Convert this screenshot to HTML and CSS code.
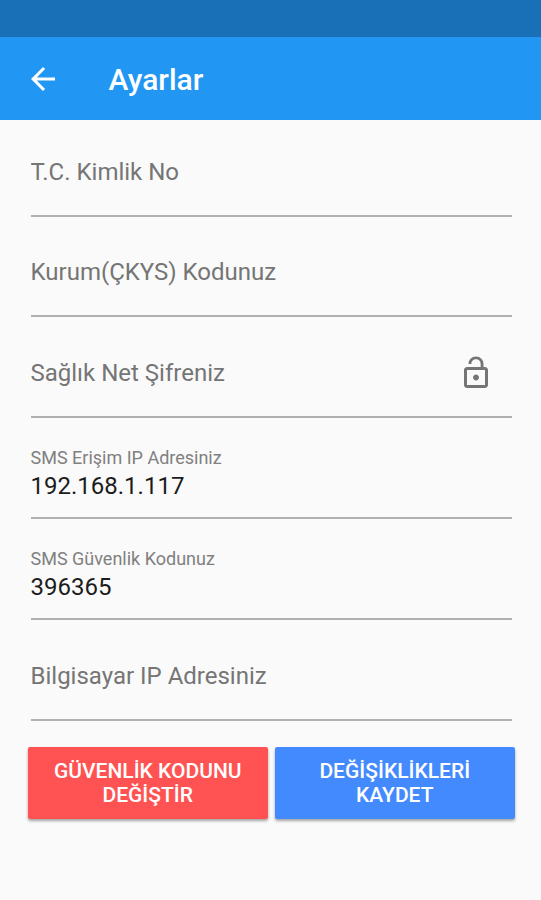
FILE: index.html
```html
<!DOCTYPE html>
<html lang="tr">
<head>
  <meta charset="UTF-8" />
  <meta name="viewport" content="width=device-width, initial-scale=1.0"/>
  <title>Ayarlar</title>
  <link rel="stylesheet" href="styles.css">
</head>
<body>
  <div class="status-bar"></div>
  <header class="app-bar">
    <svg class="icon" viewBox="0 0 24 24"><path fill="#fff" d="M20 11H7.83l5.59-5.59L12 4l-8 8 8 8 1.41-1.41L7.83 13H20v-2z"/></svg>
    <h1>Ayarlar</h1>
  </header>

  <form class="ayarlar">
    <label class="alan">
      <input type="text" placeholder="T.C. Kimlik No" />
    </label>
    <label class="alan">
      <input type="text" placeholder="Kurum(ÇKYS) Kodunuz" />
    </label>
    <label class="alan sifre">
      <input type="password" placeholder="Sağlık Net Şifreniz" />
      <svg class="icon" viewBox="0 0 24 24"><path fill="#757575" d="M12 17c1.1 0 2-.9 2-2s-.9-2-2-2-2 .9-2 2 .9 2 2 2zm6-9h-1V6c0-2.76-2.24-5-5-5S7 3.24 7 6h1.9c0-1.71 1.39-3.1 3.1-3.1 1.71 0 3.1 1.39 3.1 3.1v2H6c-1.1 0-2 .9-2 2v10c0 1.1.9 2 2 2h12c1.1 0 2-.9 2-2V10c0-1.1-.9-2-2-2zm0 12H6V10h12v10z"/></svg>
    </label>
    <label class="alan dolu">
      <span>SMS Erişim IP Adresiniz</span>
      <input type="text" value="192.168.1.117" />
    </label>
    <label class="alan dolu">
      <span>SMS Güvenlik Kodunuz</span>
      <input type="text" value="396365" />
    </label>
    <label class="alan">
      <input type="text" placeholder="Bilgisayar IP Adresiniz" />
    </label>
  </form>

  <div class="botoes">
    <button class="degistir">GÜVENLİK KODUNU<br>DEĞİŞTİR</button>
    <button class="kaydet">DEĞİŞİKLİKLERİ<br>KAYDET</button>
  </div>
</body>
</html>
```

FILE: styles.css
```css
* {
  margin: 0; padding: 0; box-sizing: border-box;
  font-family: Roboto, sans-serif;
}
body {
  height: 100vh;
  overflow: hidden;
  background: #fafafa;
}
.status-bar {
  height: 37px;
  background: #1a70b6;
}
.app-bar {
  display: flex;
  align-items: center;
  height: 83px;
  padding-left: 24.5px;
  background: #2196f3;
  color: #fff;
}
.app-bar h1 {
  margin-left: 48px;
  padding-top: 2px;
  font-size: 30px;
  font-weight: 500;
}
.icon {
  flex: none;
  width: 36px;
  height: 36px;
}
.ayarlar {
  padding: 0 29px 0 30.5px;
  margin-top: -4.2px;
}
.alan {
  display: flex;
  flex-direction: column;
  justify-content: flex-end;
  height: 100.8px;
  padding-bottom: 29px;
  border-bottom: 2px solid #b0b0b0;
}
.alan input {
  width: 100%;
  height: 28px;
  border: none;
  outline: none;
  background: transparent;
  font-size: 24px;
  line-height: 28px;
  color: #1c1c1c;
}
.alan input::placeholder {
  color: #757575;
}
.alan span {
  margin-bottom: 3px;
  font-size: 18px;
  line-height: 22px;
  color: #808080;
}
.dolu {
  padding-bottom: 17px;
}
.sifre {
  flex-direction: row;
  justify-content: space-between;
  align-items: flex-end;
  padding-right: 18px;
}
.sifre input {
  flex: 1;
}
.sifre .icon {
  margin-bottom: -4px;
}
.botoes {
  display: grid;
  grid-template-columns: 1fr 1fr;
  gap: 6.5px;
  padding: 26.4px 26px 0 27.5px;
}
button {
  height: 72px;
  padding-top: 1px;
  border: none;
  border-radius: 2px;
  box-shadow: 0 2px 3px rgba(0,0,0,0.35);
  color: #fff;
  font-size: 21px;
  font-weight: 500;
  line-height: 24px;
  text-align: center;
}
.degistir {
  background: #ff5252;
}
.kaydet {
  background: #448aff;
}
```
